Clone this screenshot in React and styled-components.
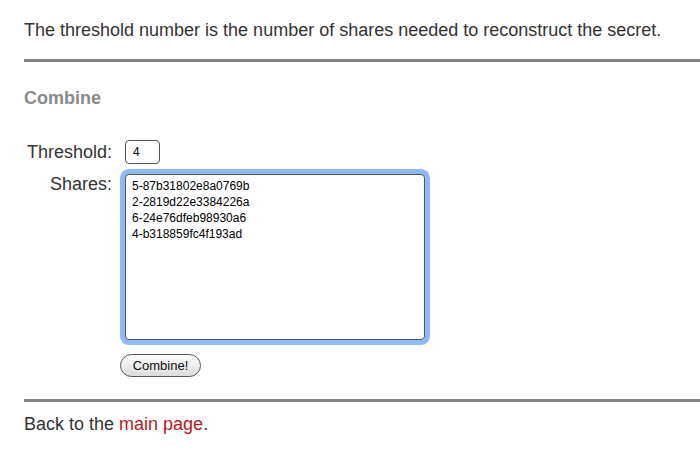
import React from 'react'
import styled, { createGlobalStyle } from 'styled-components'

const Global = createGlobalStyle`
  body {
    margin: 0;
    background: #fff;
    font-family: "Liberation Sans", Arial, sans-serif;
    color: #333;
  }
`

const Page = styled.div`
  padding: 18px 0 0 24px;
  overflow: hidden;
`

const Para = styled.p`
  margin: ${p => p.$m || '0'};
  font-size: 18px;
  line-height: 24px;
`

const Rule = styled.hr`
  border: 0;
  height: 3px;
  background: #848484;
  margin: ${p => p.$m || '0'};
  width: 700px;
`

const Heading = styled.h3`
  margin: 24px 0 0 0;
  font-size: 18px;
  font-weight: bold;
  color: #8a8a8a;
  line-height: 24px;
`

const Form = styled.div`
  display: grid;
  grid-template-columns: 88px auto;
  column-gap: 8px;
  row-gap: 6px;
  margin-top: 30px;
  align-items: start;
`

const Label = styled.label`
  font-size: 18px;
  text-align: right;
  line-height: 24px;
  margin-top: ${p => p.$mt || '0'};
`

const Small = styled.input`
  width: 22px;
  height: 18px;
  margin-left: 5px;
  border: 1px solid #555;
  border-radius: 4px;
  font-family: "Liberation Sans", Arial, sans-serif;
  font-size: 12px;
  padding: 2px 4px 2px 7px;
  color: #000;
  outline: none;
`

const Area = styled.textarea`
  width: 286px;
  height: 158px;
  margin-left: 5px;
  margin-top: 4px;
  border: 1px solid #555;
  border-radius: 4px;
  box-shadow: 0 0 0 5px #8fb9f7;
  font-family: "Liberation Sans", Arial, sans-serif;
  font-size: 12px;
  line-height: 16px;
  padding: 3px 6px;
  color: #000;
  resize: none;
  outline: none;
`

const Button = styled.button`
  margin-top: 4px;
  width: 81px;
  height: 23px;
  border: 1px solid #555;
  border-radius: 12px;
  background: linear-gradient(#fdfdfd, #dcdcdc);
  font-family: "Liberation Sans", Arial, sans-serif;
  font-size: 13px;
  color: #111;
  padding: 0;
`

const Red = styled.a`
  color: #b5201c;
  text-decoration: none;
`

export default function App() {
  return (
    <Page>
      <Global />
      <Para>The threshold number is the number of shares needed to reconstruct the secret.</Para>
      <Rule $m="17px 0 0 0" />
      <Heading>Combine</Heading>
      <Form>
        <Label>Threshold:</Label>
        <div><Small defaultValue="4" /></div>
        <Label $mt="2px">Shares:</Label>
        <div>
          <Area
            defaultValue={'5-87b31802e8a0769b\n2-2819d22e3384226a\n6-24e76dfeb98930a6\n4-b318859fc4f193ad'}
          />
        </div>
        <span />
        <div><Button>Combine!</Button></div>
      </Form>
      <Rule $m="22px 0 0 0" />
      <Para $m="10px 0 0 0">Back to the <Red href="#">main page</Red>.</Para>
    </Page>
  )
}
